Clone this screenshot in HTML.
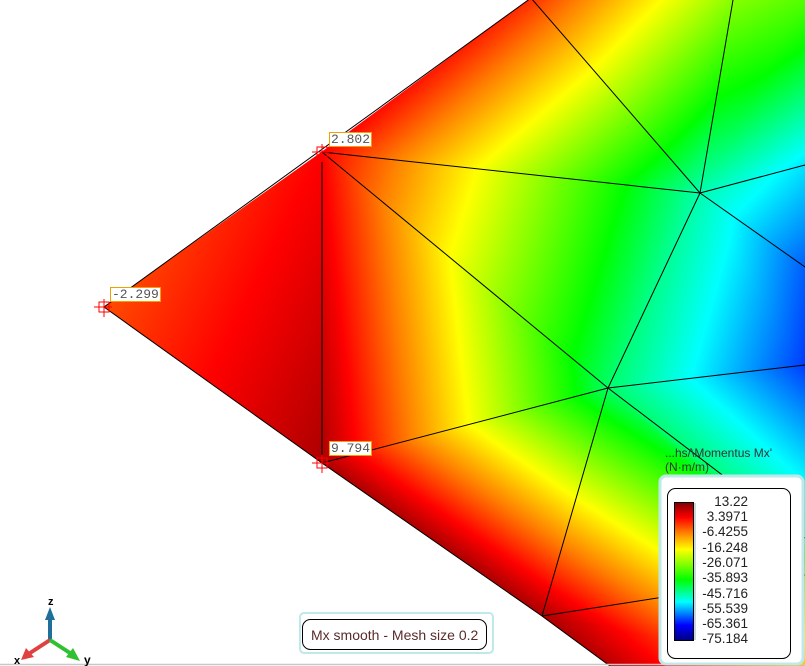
<!DOCTYPE html>
<html><head><meta charset="utf-8">
<style>
html,body{margin:0;padding:0;background:#fff;width:805px;height:666px;overflow:hidden;font-family:"Liberation Sans",sans-serif}
svg{position:absolute;left:0;top:0}
.lbl{position:absolute;background:#fff;border:1px solid #f0a000;font:13px "Liberation Mono",monospace;color:#555;line-height:13px;padding:0 1px}
</style></head><body>
<svg id="s" width="805" height="666" viewBox="0 0 805 666"></svg>
<div class="lbl" style="left:329px;top:132px">2.802</div>
<div class="lbl" style="left:110px;top:287px">-2.299</div>
<div class="lbl" style="left:329px;top:441px">9.794</div>
<script>
var NS="http://www.w3.org/2000/svg",s=document.getElementById('s');
var vmin=-75.184,vmax=13.22;
var cm=[[0,'#000080'],[0.11,'#0000ff'],[0.28,'#00ffff'],[0.44,'#00ff00'],[0.66,'#ffff00'],[0.78,'#ff8000'],[0.89,'#ff0000'],[1,'#800000']];
var N={L:[104,307,-2.3],T:[322,152,3.5],Bm:[322,463,9.8],A:[700,193,-46],B:[608,388,-42],C:[542,616,10],
P1:[531,-2,0],P2:[733,0,-26],R0:[805,0,-30],R1:[805,165,-52],R2:[805,267,-60],R3:[805,365,-62],R4:[805,538,-45],R5:[805,575,-30],R6:[805,666,-12],E:[610,666,9]};
var tris=[['L','T','Bm'],['T','A','B'],['T','B','Bm'],['Bm','B','C'],['T','P1','A'],['P1','P2','A'],['P2','R0','A'],['R0','R1','A'],['A','R1','R2'],['A','R2','R3'],['A','R3','B'],['B','R3','R4'],['B','R4','R5'],['B','R5','C'],['C','R5','R6'],['C','R6','E']];
var defs=document.createElementNS(NS,'defs');s.appendChild(defs);
function el(n,a,p){var e=document.createElementNS(NS,n);for(var k in a)e.setAttribute(k,a[k]);(p||s).appendChild(e);return e;}
tris.forEach(function(t,i){
 var p1=N[t[0]],p2=N[t[1]],p3=N[t[2]];
 var d=(p2[0]-p1[0])*(p3[1]-p1[1])-(p3[0]-p1[0])*(p2[1]-p1[1]);
 var a=((p2[2]-p1[2])*(p3[1]-p1[1])-(p3[2]-p1[2])*(p2[1]-p1[1]))/d;
 var b=((p2[0]-p1[0])*(p3[2]-p1[2])-(p3[0]-p1[0])*(p2[2]-p1[2]))/d;
 var g2=a*a+b*b;if(g2<1e-9){a=1e-4;b=0;g2=1e-8;}
 var k1=(vmin-p1[2])/g2,k2=(vmax-p1[2])/g2;
 var lg=el('linearGradient',{id:'g'+i,gradientUnits:'userSpaceOnUse',x1:p1[0]+a*k1,y1:p1[1]+b*k1,x2:p1[0]+a*k2,y2:p1[1]+b*k2},defs);
 cm.forEach(function(c){el('stop',{offset:c[0],'stop-color':c[1]},lg);});
 el('polygon',{points:[p1,p2,p3].map(function(p){return p[0]+','+p[1]}).join(' '),fill:'url(#g'+i+')',stroke:'url(#g'+i+')','stroke-width':0.8});
});
function ln(a,b){el('line',{x1:N[a][0],y1:N[a][1],x2:N[b][0],y2:N[b][1],stroke:'#000','stroke-width':1});}
[['T','Bm'],['T','A'],['T','B'],['Bm','B'],['A','B'],['B','C'],['P1','A'],['P2','A'],['A','R1'],['A','R2'],['B','R3'],['B','R4'],['C','R5'],['L','P1'],['L','Bm'],['Bm','C'],['C','E']].forEach(function(e){ln(e[0],e[1]);});
[[104,307],[322,152],[322,463]].forEach(function(p){
 el('rect',{x:p[0]-5,y:p[1]-5,width:10,height:10,fill:'none',stroke:'#f00','stroke-width':1});
 el('line',{x1:p[0]-10,y1:p[1],x2:p[0]+8,y2:p[1],stroke:'#f00'});
 el('line',{x1:p[0],y1:p[1]-8,x2:p[0],y2:p[1]+10,stroke:'#f00'});
});
</script>
<svg width="805" height="666" viewBox="0 0 805 666" style="pointer-events:none">
 <line x1="0" y1="664.5" x2="805" y2="664.5" stroke="#c8c8c8" stroke-width="1.5"/>
 <line x1="50" y1="640" x2="50" y2="618" stroke="#1f6f9a" stroke-width="4"/>
 <polygon points="50,607 45,620 55,620" fill="#1f6f9a"/>
 <line x1="50" y1="640" x2="30" y2="653" stroke="#e04040" stroke-width="4"/>
 <polygon points="21,660 26,648 34,657" fill="#e04040"/>
 <line x1="50" y1="640" x2="70" y2="653" stroke="#30c030" stroke-width="4"/>
 <polygon points="80,661 66,657 73,648" fill="#30c030"/>
 <text x="48" y="605" font-family="Liberation Sans" font-weight="bold" font-size="11" fill="#000">z</text>
 <text x="14" y="664" font-family="Liberation Sans" font-weight="bold" font-size="11" fill="#000">x</text>
 <text x="84" y="664" font-family="Liberation Sans" font-weight="bold" font-size="12" fill="#000">y</text>
 <rect x="300" y="613" width="193" height="40" rx="4" fill="#fff" stroke="#bfe8ea" stroke-width="2"/>
 <rect x="302.5" y="619.5" width="184" height="30" rx="8" fill="#fff" stroke="#000" stroke-width="1"/>
 <text x="311" y="640" font-family="Liberation Sans" font-size="14" fill="#5a2b2b">Mx smooth - Mesh size 0.2</text>
 <text x="665" y="457" font-family="Liberation Sans" font-size="12" fill="#333">...hs/\Momentus Mx'</text>
 <text x="665" y="471" font-family="Liberation Sans" font-size="12" fill="#333">(N·m/m)</text>
 <rect x="660" y="476" width="143" height="188" rx="6" fill="#fff" stroke="#bfe8ea" stroke-width="3"/>
 <rect x="667.5" y="488.5" width="123" height="170" rx="8" fill="#fff" stroke="#000" stroke-width="1"/>
 <defs><linearGradient id="lb" x1="0" y1="1" x2="0" y2="0">
  <stop offset="0" stop-color="#000080"/><stop offset="0.11" stop-color="#0000ff"/><stop offset="0.28" stop-color="#00ffff"/><stop offset="0.44" stop-color="#00ff00"/><stop offset="0.66" stop-color="#ffff00"/><stop offset="0.78" stop-color="#ff8000"/><stop offset="0.89" stop-color="#ff0000"/><stop offset="1" stop-color="#800000"/>
 </linearGradient></defs>
 <rect x="693" y="503" width="3" height="137" fill="#c8d8dc"/>
 <rect x="674.5" y="502.5" width="19" height="138" fill="url(#lb)" stroke="#000" stroke-width="1"/>
 <g font-family="Liberation Sans" font-size="13.5" fill="#222" text-anchor="end">
  <text x="748" y="506">13.22</text><text x="748" y="521">3.3971</text><text x="748" y="536">-6.4255</text><text x="748" y="552">-16.248</text><text x="748" y="567">-26.071</text><text x="748" y="582">-35.893</text><text x="748" y="598">-45.716</text><text x="748" y="613">-55.539</text><text x="748" y="628">-65.361</text><text x="748" y="643">-75.184</text>
 </g>
</svg>
</body></html>
